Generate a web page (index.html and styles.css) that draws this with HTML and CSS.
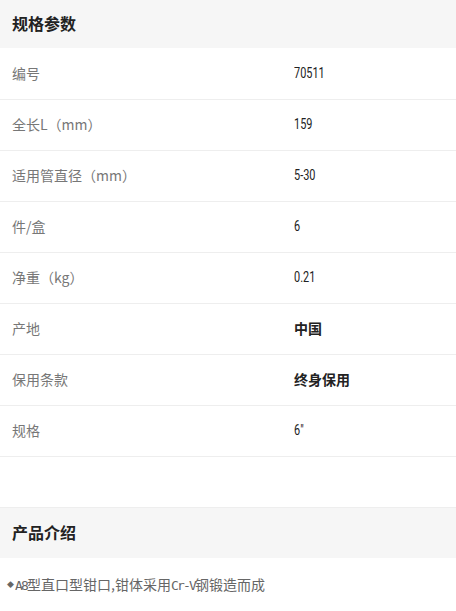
FILE: index.html
```html
<!DOCTYPE html>
<html>
<head>
<meta charset="utf-8">
<link rel="stylesheet" href="styles.css">
</head>
<body>

<div class="section-head">规格参数</div>

<div class="spec-table">
	<div class="spec-row"><span class="spec-label">编号</span><span class="spec-value">70511</span></div>
	<div class="spec-row"><span class="spec-label">全长L（mm）</span><span class="spec-value">159</span></div>
	<div class="spec-row"><span class="spec-label">适用管直径（mm）</span><span class="spec-value">5-30</span></div>
	<div class="spec-row"><span class="spec-label">件/盒</span><span class="spec-value">6</span></div>
	<div class="spec-row"><span class="spec-label">净重（kg）</span><span class="spec-value">0.21</span></div>
	<div class="spec-row"><span class="spec-label">产地</span><span class="spec-value cjk">中国</span></div>
	<div class="spec-row"><span class="spec-label">保用条款</span><span class="spec-value cjk">终身保用</span></div>
	<div class="spec-row"><span class="spec-label">规格</span><span class="spec-value">6"</span></div>
</div>

<div class="section-head second">产品介绍</div>

<ul class="intro">
	<li><span class="mono">A8</span>型直口型钳口,钳体采用<span class="mono">Cr-V</span>钢锻造而成</li>
</ul>

</body>
</html>
```

FILE: styles.css
```css
body {
	margin:0;
	font-family:"Noto Sans CJK SC", "Noto Sans", sans-serif;
	background-color:#fff;
}
.section-head {
	height:48px;
	line-height:46px;
	padding:0 12px;
	background-color:#f6f6f6;
	font-size:16px;
	font-weight:bold;
	color:#222;
}
.section-head.second {
	margin-top:50px;
	height:50px;
	line-height:48px;
	border-top:1px solid #eeeeee;
}
.spec-table {
	padding-top:1px;
}
.spec-row {
	display:flex;
	align-items:center;
	height:50px;
	box-sizing:content-box;
	padding:0;
	border-bottom:1px solid #eeeeee;
}
.spec-label {
	width:282px;
	padding-left:12px;
	padding-bottom:3px;
	font-size:14px;
	color:#777;
}
.spec-value {
	display:inline-block;
	padding-bottom:3px;
	font-family:"Roboto", sans-serif;
	font-size:14px;
	color:#222;
	transform:scaleX(0.78);
	transform-origin:left center;
}
.spec-value.cjk {
	font-family:"Noto Sans CJK SC", sans-serif;
	font-weight:bold;
	transform:none;
}
.intro {
	list-style:none;
	margin:0;
	padding:16px 0 0 7px;
	font-size:14px;
	color:#666;
}
.intro li:before {
	content:"◆";
	font-size:7px;
	vertical-align:3px;
	margin-right:1px;
}
.mono {
	font-family:"DejaVu Sans Mono", monospace;
	font-size:13px;
	letter-spacing:-1.8px;
}
```
